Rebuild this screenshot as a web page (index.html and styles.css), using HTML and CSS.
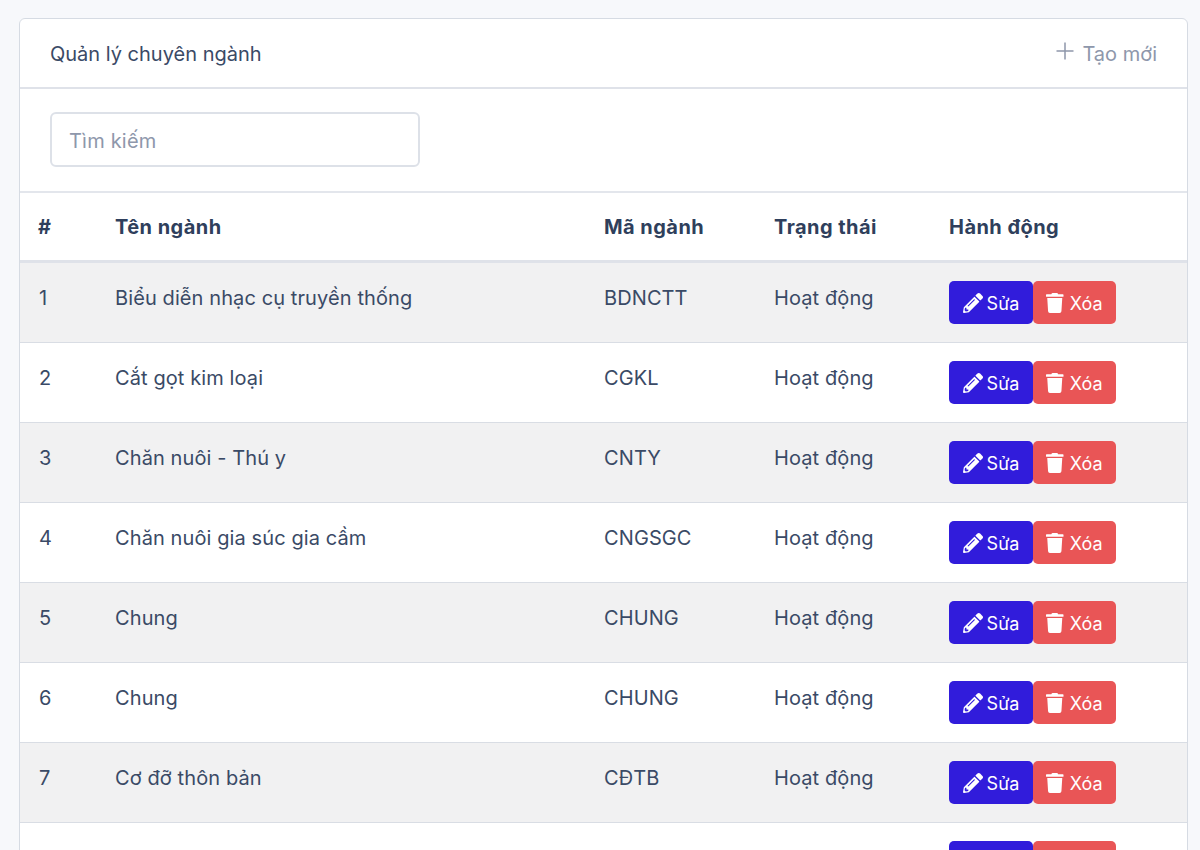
FILE: index.html
```html
<!DOCTYPE html>
<html lang="vi">
<head>
<meta charset="utf-8">
<title>Quản lý chuyên ngành</title>
<link rel="stylesheet" href="styles.css">
</head>
<body>
<main class="card">
  <header class="card-head">
    <h1 class="card-title">Quản lý chuyên ngành</h1>
    <a class="create-link" href="#">
      <svg class="plus-icon" viewBox="0 0 18 18" aria-hidden="true"><path d="M9 .5v17M.5 9h17"/></svg>
      <span>Tạo mới</span>
    </a>
  </header>
  <div class="search-bar">
    <input class="search-input" type="text" placeholder="Tìm kiếm">
  </div>
  <table class="data-table">
    <colgroup><col class="col-num"><col class="col-name"><col class="col-code"><col class="col-status"><col class="col-action"></colgroup>
    <thead>
      <tr><th>#</th><th>Tên ngành</th><th>Mã ngành</th><th>Trạng thái</th><th>Hành động</th></tr>
    </thead>
    <tbody>
      <tr><td>1</td><td>Biểu diễn nhạc cụ truyền thống</td><td>BDNCTT</td><td>Hoạt động</td><td class="actions"><button class="btn btn-edit"><svg class="btn-icon" viewBox="0 0 512 512"><use href="#pencil"/></svg>Sửa</button><button class="btn btn-delete"><svg class="btn-icon" viewBox="0 0 448 512"><use href="#trash"/></svg>Xóa</button></td></tr>
      <tr><td>2</td><td>Cắt gọt kim loại</td><td>CGKL</td><td>Hoạt động</td><td class="actions"><button class="btn btn-edit"><svg class="btn-icon" viewBox="0 0 512 512"><use href="#pencil"/></svg>Sửa</button><button class="btn btn-delete"><svg class="btn-icon" viewBox="0 0 448 512"><use href="#trash"/></svg>Xóa</button></td></tr>
      <tr><td>3</td><td>Chăn nuôi - Thú y</td><td>CNTY</td><td>Hoạt động</td><td class="actions"><button class="btn btn-edit"><svg class="btn-icon" viewBox="0 0 512 512"><use href="#pencil"/></svg>Sửa</button><button class="btn btn-delete"><svg class="btn-icon" viewBox="0 0 448 512"><use href="#trash"/></svg>Xóa</button></td></tr>
      <tr><td>4</td><td>Chăn nuôi gia súc gia cầm</td><td>CNGSGC</td><td>Hoạt động</td><td class="actions"><button class="btn btn-edit"><svg class="btn-icon" viewBox="0 0 512 512"><use href="#pencil"/></svg>Sửa</button><button class="btn btn-delete"><svg class="btn-icon" viewBox="0 0 448 512"><use href="#trash"/></svg>Xóa</button></td></tr>
      <tr><td>5</td><td>Chung</td><td>CHUNG</td><td>Hoạt động</td><td class="actions"><button class="btn btn-edit"><svg class="btn-icon" viewBox="0 0 512 512"><use href="#pencil"/></svg>Sửa</button><button class="btn btn-delete"><svg class="btn-icon" viewBox="0 0 448 512"><use href="#trash"/></svg>Xóa</button></td></tr>
      <tr><td>6</td><td>Chung</td><td>CHUNG</td><td>Hoạt động</td><td class="actions"><button class="btn btn-edit"><svg class="btn-icon" viewBox="0 0 512 512"><use href="#pencil"/></svg>Sửa</button><button class="btn btn-delete"><svg class="btn-icon" viewBox="0 0 448 512"><use href="#trash"/></svg>Xóa</button></td></tr>
      <tr><td>7</td><td>Cơ đỡ thôn bản</td><td>CĐTB</td><td>Hoạt động</td><td class="actions"><button class="btn btn-edit"><svg class="btn-icon" viewBox="0 0 512 512"><use href="#pencil"/></svg>Sửa</button><button class="btn btn-delete"><svg class="btn-icon" viewBox="0 0 448 512"><use href="#trash"/></svg>Xóa</button></td></tr>
      <tr><td>8</td><td>Công nghệ ô tô</td><td>CNOTO</td><td>Hoạt động</td><td class="actions"><button class="btn btn-edit"><svg class="btn-icon" viewBox="0 0 512 512"><use href="#pencil"/></svg>Sửa</button><button class="btn btn-delete"><svg class="btn-icon" viewBox="0 0 448 512"><use href="#trash"/></svg>Xóa</button></td></tr>
    </tbody>
  </table>
</main>
<svg class="icon-defs" aria-hidden="true">
  <defs>
    <path id="pencil" d="M497.9 142.1l-46.1 46.1c-4.700 4.700-12.300 4.700-17 0l-111-111c-4.700-4.700-4.700-12.300 0-17l46.100-46.100c18.700-18.700 49.100-18.700 67.900 0l60.100 60.100c18.800 18.700 18.800 49.100 0 67.900zM284.200 99.800L21.600 362.400.4 483.900c-2.900 16.400 11.400 30.600 27.800 27.800l121.500-21.300 262.600-262.600c4.700-4.700 4.700-12.300 0-17l-111-111c-4.800-4.700-12.400-4.700-17.100 0zM124.100 339.900c-5.500-5.500-5.500-14.300 0-19.800l154-154c5.500-5.500 14.300-5.500 19.800 0s5.500 14.300 0 19.800l-154 154c-5.500 5.500-14.300 5.500-19.800 0zM88 424h48v36.300l-64.500 11.300-31.100-31.100L51.700 376H88v48z"/>
    <path id="trash" d="M432 32H312l-9.400-18.700A24 24 0 0 0 281.100 0H166.800a23.720 23.720 0 0 0-21.400 13.300L136 32H16A16 16 0 0 0 0 48v32a16 16 0 0 0 16 16h416a16 16 0 0 0 16-16V48a16 16 0 0 0-16-16zM53.200 467a48 48 0 0 0 47.900 45h245.800a48 48 0 0 0 47.900-45L416 128H32z"/>
  </defs>
</svg>
</body>
</html>
```

FILE: styles.css
```css
* { box-sizing: border-box; }

html, body { height: 100%; overflow: hidden; }

body {
  margin: 0;
  padding: 18px 12px 0 19px;
  background: #f7f8fb;
  font-family: Inter, "Liberation Sans", sans-serif;
  font-size: 20px;
  color: #3a4a66;
}

.card {
  width: 1169px;
  background: #fff;
  border: 1px solid #d6dbe3;
  border-radius: 6px;
}

.card-head {
  display: flex;
  align-items: center;
  justify-content: space-between;
  height: 70px;
  padding: 2px 30px 0;
  border-bottom: 2px solid #dfe2e9;
}

.card-title {
  margin: 0;
  font-size: 20px;
  font-weight: 400;
  color: #3a4a66;
}

.create-link {
  display: flex;
  align-items: center;
  gap: 8px;
  color: #8e97ab;
  text-decoration: none;
}

.plus-icon {
  width: 18px;
  height: 18px;
  margin-top: -6px;
  fill: none;
  stroke: #8e97ab;
  stroke-width: 1.5;
}

.search-bar {
  height: 104px;
  padding: 23px 30px 0;
  border-bottom: 2px solid #e3e6ec;
}

.search-input {
  display: block;
  width: 370px;
  height: 55px;
  padding: 2px 17px 0;
  border: 2px solid #dde1e8;
  border-radius: 6px;
  font: inherit;
  letter-spacing: 0.2px;
  color: #3a4a66;
  outline: none;
}

.search-input::placeholder { color: #8e97ab; opacity: 1; }

.data-table {
  width: 1167px;
  table-layout: fixed;
  border-collapse: separate;
  border-spacing: 0;
}

.col-num { width: 76px; }
.col-name { width: 489px; }
.col-code { width: 170px; }
.col-status { width: 175px; }
.col-action { width: 257px; }

.data-table th {
  height: 70px;
  padding: 0 19px;
  text-align: left;
  font-weight: 700;
  letter-spacing: 0.45px;
  color: #2f3f5c;
  border-bottom: 3px solid #dfe2e9;
}

.data-table th:first-child { padding-left: 18px; }

.data-table td {
  height: 80px;
  padding: 20px 19px 0;
  vertical-align: top;
  line-height: 30px;
  letter-spacing: 0.1px;
  border-bottom: 1px solid #d9dde4;
}

.data-table tbody tr:nth-child(odd) { background: #f1f1f2; }

.data-table td.actions { padding-top: 18px; }

.actions { white-space: nowrap; font-size: 0; }

.btn {
  display: inline-flex;
  align-items: center;
  justify-content: center;
  height: 43px;
  padding: 1px 0 0;
  border: 1px solid transparent;
  border-radius: 5px;
  font-family: inherit;
  font-size: 18px;
  color: #fff;
  vertical-align: top;
}

.btn-edit { width: 84px; gap: 4px; background: #311cdb; }
.btn-delete { width: 83px; gap: 6px; background: #e95556; }

.btn-icon { height: 20px; margin-top: -1px; fill: #fff; }

.icon-defs { display: none; }
```
